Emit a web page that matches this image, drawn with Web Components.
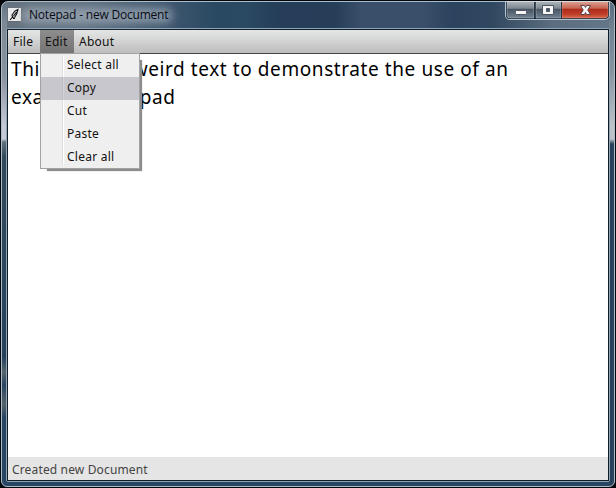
<!DOCTYPE html>
<html lang="en"><head><meta charset="utf-8"><title>Notepad</title>
<style>html,body{margin:0;width:616px;height:488px;overflow:hidden;background:#05070b}</style></head><body>
<notepad-window>
  <title-bar slot="title">Notepad - new Document</title-bar>
  <menu-bar slot="menu">
    <menu-entry style="--w:32px">File</menu-entry>
    <menu-entry active style="--w:34px">Edit
      <drop-menu slot="popup">
        <menu-item>Select all</menu-item>
        <menu-item selected>Copy</menu-item>
        <menu-item>Cut</menu-item>
        <menu-item>Paste</menu-item>
        <menu-item>Clear all</menu-item>
      </drop-menu>
    </menu-entry>
    <menu-entry style="--w:44px">About</menu-entry>
  </menu-bar>
  <text-editor><div>This is some weird text to demonstrate the use of an</div><div>example notepad</div></text-editor>
  <status-bar slot="status">Created new Document</status-bar>
</notepad-window>
<script>
function define(name, html){
  customElements.define(name, class extends HTMLElement{
    constructor(){ super(); this.attachShadow({mode:'open'}).innerHTML = html; }
  });
}
define('notepad-window', `<style>
:host{display:block;box-sizing:border-box;width:616px;height:488px;padding:1px;background:#05070b;font-family:"Noto Sans","Open Sans",sans-serif;color:#111}
.frame{box-sizing:border-box;height:486px;border:1px solid #a9bdcb;border-radius:7px 7px 6px 6px;padding:0 4px 4px;display:flex;flex-direction:column;
background:
linear-gradient(#64727f 0,#7d8895 20px,#8b939e 75px,#c5cad8 125px,#c5cad8 137px,#60737b 140px,#34495a 155px,#2e475c 250px,#27415b 355px,#59666e 370px,#2a4562 383px,#56646b 402px,#2a4562 415px,#2a4562) left/5px 100% no-repeat,
linear-gradient(#596b7d 0,#738492 30px,#8794a0 70px,#bdc3c9 125px,#bdc3c9 137px,#62747e 140px,#29425a 142px,#29425a 480px) right/5px 100% no-repeat,
linear-gradient(90deg,#66727e 0,#627282 80px,#37516a 185px,#294962 215px,#2a4962 245px,#263e59 275px,#263e58 333px,#3a506a 360px,#3a506a 420px,#2b435e 450px,#304860 490px,#5b6d7e 550px,#64788a) top/100% 28px no-repeat,#2a4562}
.client{box-sizing:border-box;flex:1;min-height:0;border:1px solid #8fa5b6;border-radius:2px;display:flex}
.inner{flex:1;border:1px solid #111c29;display:flex;flex-direction:column;background:#fff;min-width:0}
</style><div class="frame"><slot name="title"></slot><div class="client"><div class="inner"><slot name="menu"></slot><slot></slot><slot name="status"></slot></div></div></div>`);
define('title-bar', `<style>
:host{display:flex;height:26px;flex:none;font:12px/16px "Open Sans","Noto Sans",sans-serif;color:#080b14;position:relative}
.icon{margin:6px 0 0 2px;width:14px;height:14px;flex:none}
.text{margin:5px 0 0 7px;height:16px;white-space:nowrap;letter-spacing:-.2px;position:relative}
.text::before{content:"";position:absolute;left:-8px;right:-5px;top:1px;bottom:0;background:rgba(172,184,196,.62);border-radius:8px;filter:blur(4px)}
.text span{position:relative}
window-buttons{position:absolute;right:0;top:-1px}
</style><svg class="icon" viewBox="0 0 14 14"><rect width="14" height="14" fill="#e9eaeb"/><path d="M0 13.500H13.500V0" fill="none" stroke="#65686d"/><path d="M2 12 4.500 9 4 7 7 3 10 1.500 9 5 7 9 4.500 9.500M8.500 4 5.500 8M5 10.500H7M9 6.500H8" fill="none" stroke="#111" stroke-width="1.100"/></svg>
<div class="text"><span><slot></slot></span></div><window-buttons></window-buttons>`);
define('window-buttons', `<style>
:host{display:block;width:105px;height:19px;line-height:0}svg{display:block}
</style><svg width="105" height="19" viewBox="-1 0 105 19"><defs>
<linearGradient id="g" x2="0" y2="1"><stop stop-color="#b2b9bf"/><stop offset=".43" stop-color="#7d8791"/><stop offset=".48" stop-color="#495563"/><stop offset="1" stop-color="#718292"/></linearGradient>
<linearGradient id="r" x2="0" y2="1"><stop stop-color="#dfa79b"/><stop offset=".43" stop-color="#c5634f"/><stop offset=".48" stop-color="#ad2c1b"/><stop offset=".75" stop-color="#bd3a25"/><stop offset="1" stop-color="#d7694c"/></linearGradient></defs>
<path d="M-.5 0V14Q-.5 18.500 4 18.500H98Q103.500 18.500 103.500 14V0" fill="#172535" stroke="#b4c3cd"/>
<path d="M1 0H28V17H4Q1 17 1 14Z" fill="url(#g)" stroke="#d5dde166"/><path d="M30 0H55V17H30Z" fill="url(#g)" stroke="#d5dde166"/><path d="M56 0H102V14Q102 17 98 17H56Z" fill="url(#r)" stroke="#f1b6a366"/>
<path d="M28.500 0V17M55.500 0V17" stroke="#293542"/><path d="M0 .5H103" stroke="#d5dce1"/>
<rect x="9.500" y="9.500" width="11" height="4" rx="1" fill="#f5f5f5" stroke="#4d5662"/>
<path fill-rule="evenodd" d="M36.500 4.500H47.500V13.500H36.500ZM40.500 7.500V10.500H43.500V7.500Z" fill="#f5f5f5" stroke="#4d5662"/>
<path d="M74.500 4.500H78.500L79.500 6.500 80.500 4.500H84.500L81.800 9 84.500 13.500H80.500L79.500 11.500 78.500 13.500H74.500L77.200 9Z" fill="#f5f5f5" stroke="#5d4148"/></svg>`);
define('menu-bar', `<style>:host{display:flex;box-sizing:border-box;height:24px;flex:none;background:linear-gradient(#e5e7e6,#bdbdbd);border-bottom:1px solid #444}</style><slot></slot>`);
define('menu-entry', `<style>
:host{display:block;position:relative;box-sizing:border-box;width:var(--w);height:23px;padding-left:5px;font-size:12px;line-height:23px;letter-spacing:.25px;white-space:nowrap}
:host([active]){background:linear-gradient(#8d8d8d,#747474)}
</style><slot></slot><slot name="popup"></slot>`);
define('drop-menu', `<style>
:host{position:absolute;z-index:2;left:0;top:23px;box-sizing:border-box;width:100px;height:116px;border:1px solid #a3a3a3;background:#efefef;display:block;white-space:normal}
.shade{position:absolute;inset:6px -3px -3px 6px;background:#8c8c8c;box-shadow:0 0 1px #aaa;z-index:-1}
.face{position:relative;height:114px;box-shadow:0 0 0 1px #a3a3a3;background:linear-gradient(90deg,#ddd 50%,#fff 50%) 21px 2px/2px 110px no-repeat #efefef}
</style><div class="shade"></div><div class="face"><slot></slot></div>`);
define('menu-item', `<style>
:host{display:block;box-sizing:border-box;height:23px;padding-left:26px;font-size:12px;line-height:22px;letter-spacing:.25px;white-space:nowrap}
:host([selected]){background:linear-gradient(90deg,#bfbec4 50%,#d2d1d6 50%) 21px 0/2px 100% no-repeat #c8c7cd}
</style><slot></slot>`);
define('text-editor', `<style>:host{display:block;flex:1;min-height:0;background:#fff;padding:1px 0 0 3px;font-size:19px;line-height:28px;letter-spacing:.58px;color:#000;white-space:nowrap}</style><slot></slot>`);
define('status-bar', `<style>:host{display:block;flex:none;height:23px;background:#e5e5e5;padding-left:4px;font-size:12px;line-height:25px;letter-spacing:.15px;color:#444;box-sizing:border-box}</style><slot></slot>`);
</script></body></html>
